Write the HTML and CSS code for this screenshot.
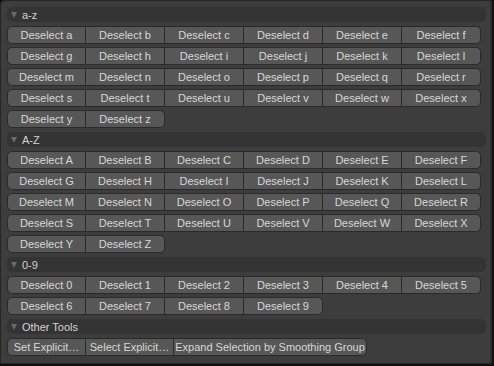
FILE: index.html
```html
<!DOCTYPE html><html lang="en">
<head>
  <meta charset="UTF-8" />
  <title>Deselect Tools</title>
  <link rel="stylesheet" href="styles.css">
</head>
<body>
  <div class="panel">
    <div class="section">
      <div class="header"><span class="arrow"></span>a-z</div>
      <div class="row"><button>Deselect a</button><button>Deselect b</button><button>Deselect c</button><button>Deselect d</button><button>Deselect e</button><button>Deselect f</button></div>
      <div class="row"><button>Deselect g</button><button>Deselect h</button><button>Deselect i</button><button>Deselect j</button><button>Deselect k</button><button>Deselect l</button></div>
      <div class="row"><button>Deselect m</button><button>Deselect n</button><button>Deselect o</button><button>Deselect p</button><button>Deselect q</button><button>Deselect r</button></div>
      <div class="row"><button>Deselect s</button><button>Deselect t</button><button>Deselect u</button><button>Deselect v</button><button>Deselect w</button><button>Deselect x</button></div>
      <div class="row"><button>Deselect y</button><button>Deselect z</button></div>
    </div>
    <div class="section">
      <div class="header"><span class="arrow"></span>A-Z</div>
      <div class="row"><button>Deselect A</button><button>Deselect B</button><button>Deselect C</button><button>Deselect D</button><button>Deselect E</button><button>Deselect F</button></div>
      <div class="row"><button>Deselect G</button><button>Deselect H</button><button>Deselect I</button><button>Deselect J</button><button>Deselect K</button><button>Deselect L</button></div>
      <div class="row"><button>Deselect M</button><button>Deselect N</button><button>Deselect O</button><button>Deselect P</button><button>Deselect Q</button><button>Deselect R</button></div>
      <div class="row"><button>Deselect S</button><button>Deselect T</button><button>Deselect U</button><button>Deselect V</button><button>Deselect W</button><button>Deselect X</button></div>
      <div class="row"><button>Deselect Y</button><button>Deselect Z</button></div>
    </div>
    <div class="section">
      <div class="header"><span class="arrow"></span>0-9</div>
      <div class="row"><button>Deselect 0</button><button>Deselect 1</button><button>Deselect 2</button><button>Deselect 3</button><button>Deselect 4</button><button>Deselect 5</button></div>
      <div class="row"><button>Deselect 6</button><button>Deselect 7</button><button>Deselect 8</button><button>Deselect 9</button></div>
    </div>
    <div class="section">
      <div class="header"><span class="arrow"></span>Other Tools</div>
      <div class="row"><button>Set Explicit…</button><button class="mid">Select Explicit…</button><button class="wide">Expand Selection by Smoothing Group</button></div>
    </div>
  </div>
</body>
</html>
```
FILE: styles.css
```css
body {
  margin: 0;
  background: #111;
  font-family: "Liberation Sans", Arial, sans-serif;
  font-size: 11px;
}
.panel {
  width: 492px;
  height: 364px;
  box-sizing: border-box;
  background: #3d3d3d;
  border: 1px solid #262626;
  border-right: 2px solid #2c2c2c;
  border-radius: 5px 0 0 0;
  padding: 6px 6px 0 6px;
  display: flex;
  flex-direction: column;
  gap: 4px;
}
.section {
  display: flex;
  flex-direction: column;
  gap: 3px;
}
.header {
  width: 479px;
  height: 15px;
  box-sizing: border-box;
  background: #343434;
  border-radius: 5px;
  color: #d2d2d2;
  display: flex;
  align-items: center;
  padding-left: 4px;
  margin-bottom: 1px;
}
.arrow {
  width: 0;
  height: 0;
  border-left: 3px solid transparent;
  border-right: 3px solid transparent;
  border-top: 6px solid #6a6a6a;
  margin-right: 5px;
  margin-top: 1px;
}
.row {
  display: flex;
  height: 18px;
}
.row button {
  width: 79px;
  height: 18px;
  margin: 0;
  padding: 0;
  box-sizing: border-box;
  background: #575757;
  border: 1px solid #2a2a2a;
  border-left: none;
  color: #d8d8d8;
  font-family: inherit;
  font-size: 11px;
  white-space: nowrap;
}
.row button:first-child {
  border-left: 1px solid #2a2a2a;
  border-radius: 5px 0 0 5px;
}
.row button:last-child {
  border-radius: 0 5px 5px 0;
}
.row button.mid {
  width: 88px;
}
.row button.wide {
  width: 193px;
}
```
